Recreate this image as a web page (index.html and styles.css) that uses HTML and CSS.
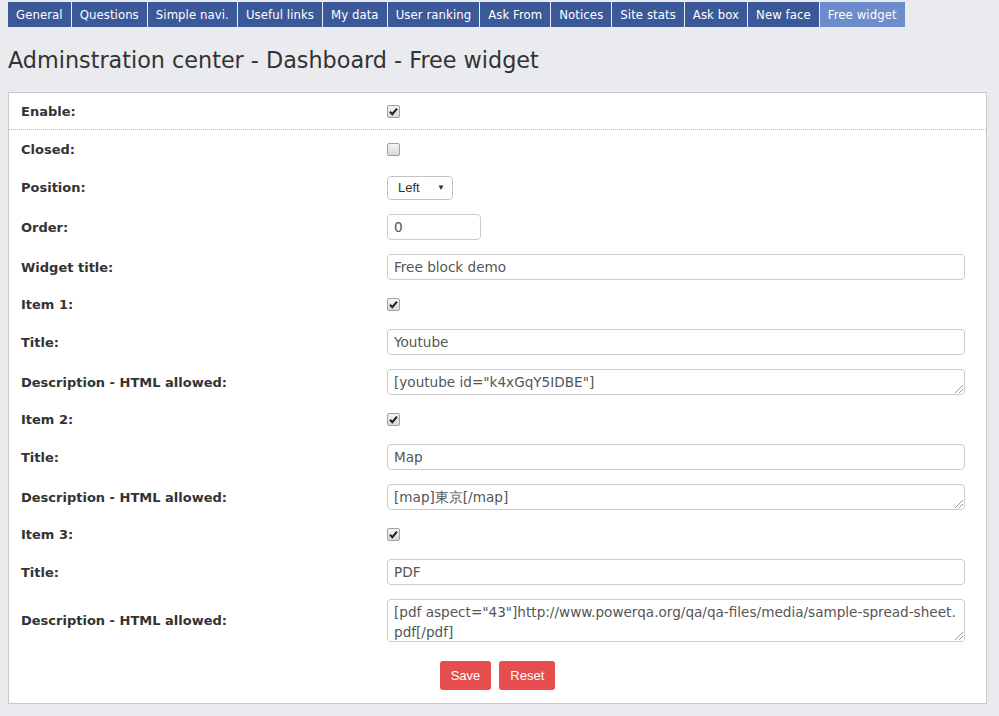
FILE: index.html
```html
<!DOCTYPE html>
<html>
<head>
<meta charset="utf-8">
<link rel="stylesheet" href="styles.css">
</head>
<body>
<nav class="tabs">
  <a class="tab">General</a><a class="tab">Questions</a><a class="tab">Simple navi.</a><a class="tab">Useful links</a><a class="tab">My data</a><a class="tab">User ranking</a><a class="tab">Ask From</a><a class="tab">Notices</a><a class="tab">Site stats</a><a class="tab">Ask box</a><a class="tab">New face</a><a class="tab active">Free widget</a>
</nav>
<h1 class="title">Adminstration center - Dashboard - Free widget</h1>
<div class="panel">
  <div class="row row-first">
    <div class="label">Enable:</div>
    <div class="field"><span class="cb checked"><svg viewBox="0 0 13 13" width="13" height="13"><path d="M3 6.8 L5.3 9.2 L10 3.6" fill="none" stroke="#222" stroke-width="2.1"/></svg></span></div>
  </div>
  <div class="row row-closed">
    <div class="label">Closed:</div>
    <div class="field"><span class="cb"></span></div>
  </div>
  <div class="row row-pos">
    <div class="label">Position:</div>
    <div class="field"><div class="select"><span>Left</span><span class="arrow">▼</span></div></div>
  </div>
  <div class="row input-row">
    <div class="label">Order:</div>
    <div class="field"><div class="input small">0</div></div>
  </div>
  <div class="row input-row">
    <div class="label">Widget title:</div>
    <div class="field"><div class="input">Free block demo</div></div>
  </div>
  <div class="row check-row">
    <div class="label">Item 1:</div>
    <div class="field"><span class="cb checked"><svg viewBox="0 0 13 13" width="13" height="13"><path d="M3 6.8 L5.3 9.2 L10 3.6" fill="none" stroke="#222" stroke-width="2.1"/></svg></span></div>
  </div>
  <div class="row input-row">
    <div class="label">Title:</div>
    <div class="field"><div class="input">Youtube</div></div>
  </div>
  <div class="row input-row">
    <div class="label">Description - HTML allowed:</div>
    <div class="field"><div class="input textarea">[youtube id="k4xGqY5IDBE"]<span class="grip"></span></div></div>
  </div>
  <div class="row check-row">
    <div class="label">Item 2:</div>
    <div class="field"><span class="cb checked"><svg viewBox="0 0 13 13" width="13" height="13"><path d="M3 6.8 L5.3 9.2 L10 3.6" fill="none" stroke="#222" stroke-width="2.1"/></svg></span></div>
  </div>
  <div class="row input-row">
    <div class="label">Title:</div>
    <div class="field"><div class="input">Map</div></div>
  </div>
  <div class="row input-row">
    <div class="label">Description - HTML allowed:</div>
    <div class="field"><div class="input textarea">[map]東京[/map]<span class="grip"></span></div></div>
  </div>
  <div class="row check-row">
    <div class="label">Item 3:</div>
    <div class="field"><span class="cb checked"><svg viewBox="0 0 13 13" width="13" height="13"><path d="M3 6.8 L5.3 9.2 L10 3.6" fill="none" stroke="#222" stroke-width="2.1"/></svg></span></div>
  </div>
  <div class="row input-row">
    <div class="label">Title:</div>
    <div class="field"><div class="input">PDF</div></div>
  </div>
  <div class="row tall-row">
    <div class="label">Description - HTML allowed:</div>
    <div class="field"><div class="input textarea tall">[pdf aspect="43"]http://www.powerqa.org/qa/qa-files/media/sample-spread-sheet.<br>pdf[/pdf]<span class="grip"></span></div></div>
  </div>
  <div class="buttons">
    <button class="btn">Save</button><button class="btn">Reset</button>
  </div>
</div>
</body>
</html>
```
FILE: styles.css
```css
html, body {
  margin: 0;
  padding: 0;
  background: #e9ebee;
}
body {
  font-family: "DejaVu Sans", Verdana, sans-serif;
  color: #333;
  height: 716px;
  overflow: hidden;
}
.tabs {
  display: flex;
  padding: 2px 0 0 8px;
  height: 25px;
}
.tab {
  display: block;
  height: 25px;
  line-height: 25px;
  padding: 0 8px;
  margin-right: 1px;
  background: #3b5998;
  color: #fff;
  font-family: "DejaVu Sans Condensed", "DejaVu Sans", sans-serif;
  font-size: 13px;
  letter-spacing: 0.08px;
  white-space: nowrap;
}
.tab.active {
  background: #6d8ccc;
}
.title {
  margin: 0 0 18px 0;
  padding: 18px 0 0 8px;
  height: 47px;
  font-weight: normal;
  font-size: 22.3px;
  line-height: 30px;
  color: #333;
  box-sizing: border-box;
}
.panel {
  margin: 0 12px 0 8px;
  border: 1px solid #c9c9c9;
  background: #fff;
  padding: 0 21px 0 12px;
}
.row {
  display: grid;
  grid-template-columns: 366px 1fr;
  align-items: center;
}
.row-first {
  height: 36px;
  border-bottom: 1px dotted #bbb;
  margin: 0 -21px 0 -12px;
  padding: 0 21px 0 12px;
}
.row-closed { height: 38px; }
.row-pos { height: 39px; }
.check-row { height: 35px; }
.input-row { height: 40px; }
.tall-row { height: 57px; }
.label {
  font-weight: bold;
  font-size: 13px;
  color: #333;
}
.field {
  display: flex;
  align-items: center;
  min-width: 0;
}
.cb {
  display: block;
  width: 11px;
  height: 11px;
  border: 1px solid #a0a0a0;
  border-radius: 2px;
  background: linear-gradient(#f4f4f4, #d8d8d8);
  position: relative;
}
.cb svg {
  position: absolute;
  left: -1px;
  top: -1px;
}
.select {
  border: 1px solid #c4c4c4;
  border-radius: 4px;
  display: flex;
  align-items: center;
  justify-content: space-between;
  padding: 0 7px 0 10px;
  box-sizing: border-box;
  width: 66px;
  height: 24px;
  font-family: "Liberation Sans", Arial, sans-serif;
  font-size: 13px;
  color: #333;
}
.select .arrow {
  font-size: 8px;
  color: #333;
}
.input {
  box-sizing: border-box;
  width: 100%;
  height: 26px;
  border: 1px solid #cbcbcb;
  border-radius: 4px;
  padding: 0 6px;
  font-family: "DejaVu Sans", Verdana, sans-serif;
  font-size: 13.6px;
  line-height: 25px;
  color: #555;
  position: relative;
  white-space: nowrap;
  overflow: hidden;
}
.input.small {
  width: 94px;
}
.input.tall {
  height: 43px;
  line-height: 20px;
  padding-top: 2px;
}
.grip {
  position: absolute;
  right: 1px;
  bottom: 1px;
  width: 8px;
  height: 8px;
  background: linear-gradient(135deg, transparent 45%, #999 45%, #999 52%, transparent 52%, transparent 70%, #999 70%, #999 77%, transparent 77%);
}
.buttons {
  display: flex;
  justify-content: center;
  gap: 8px;
  padding: 12px 0 13px 9px;
}
.btn {
  height: 29px;
  padding: 0 11px;
  border: none;
  border-radius: 3px;
  background: #e74c4f;
  color: #fff;
  font-family: "Liberation Sans", Arial, sans-serif;
  font-size: 13px;
}
```
